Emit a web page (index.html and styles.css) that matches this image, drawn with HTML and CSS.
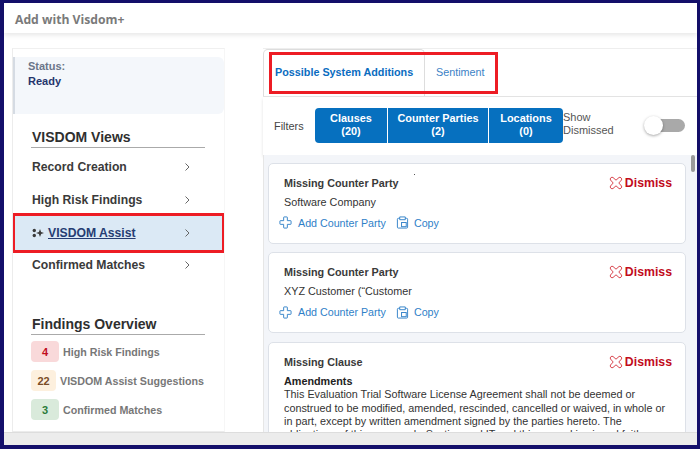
FILE: index.html
```html
<!DOCTYPE html>
<html lang="en">
<head>
<meta charset="utf-8">
<title>Add with Visdom+</title>
<link rel="stylesheet" href="styles.css">
</head>
<body>
<svg class="defs" aria-hidden="true">
  <symbol id="i-chev" viewBox="0 0 8 10"><path d="M2.500 1.500L6 5 2.500 8.500"/></symbol>
  <symbol id="i-x" viewBox="0 0 14 14"><path d="M4 1.500L7 4.200 10 1.500Q11 .8 12 1.800 13.200 3 12.500 4L9.800 7 12.500 10Q13.200 11 12 12.200 11 13.200 10 12.500L7 9.800 4 12.500Q3 13.200 1.800 12.200 .8 11 1.500 10L4.200 7 1.500 4Q.8 3 1.800 1.800 3 .8 4 1.500Z"/></symbol>
  <symbol id="i-plus" viewBox="0 0 14 14"><path d="M5 1.500Q5 1 5.500 1H8.500Q9 1 9 1.500V5H12.500Q13 5 13 5.500V8.500Q13 9 12.500 9H9V12.500Q9 13 8.500 13H5.500Q5 13 5 12.500V9H1.500Q1 9 1 8.500V5.500Q1 5 1.500 5H5Z"/></symbol>
  <symbol id="i-copy" viewBox="0 0 14 14"><path d="M4 2.500H2.500Q1.500 2.500 1.500 3.500V12Q1.500 13 2.500 13H11.500Q12.500 13 12.500 12V3.500Q12.500 2.500 11.500 2.500H10M4 1H10V4H4Z"/><rect x="6" y="7" width="5" height="4.500"/></symbol>
</svg>
<div class="frame">
  <header class="topbar">Add with Visdom+</header>
  <div class="workspace">
    <aside class="sidebar">
      <div class="status">
        <div class="status-label">Status:</div>
        <div class="status-value">Ready</div>
      </div>
      <h2 class="section-title views-title">VISDOM Views</h2>
      <nav class="nav">
        <div class="nav-item"><span>Record Creation</span><svg class="chev"><use href="#i-chev"/></svg></div>
        <div class="nav-item"><span>High Risk Findings</span><svg class="chev"><use href="#i-chev"/></svg></div>
        <div class="nav-item active">
          <span class="assist-label">
            <svg class="sparkle" viewBox="0 0 12 10"><path d="M8 1L9.100 3.900 12 5 9.100 6.100 8 9 6.900 6.100 4 5 6.900 3.900Z"/><circle cx="2.300" cy="2.500" r="1.700"/><circle cx="2.300" cy="7.500" r="1.700"/></svg>
            <u>VISDOM Assist</u>
          </span>
          <svg class="chev"><use href="#i-chev"/></svg>
        </div>
        <div class="nav-item"><span>Confirmed Matches</span><svg class="chev"><use href="#i-chev"/></svg></div>
      </nav>
      <h2 class="section-title findings-title">Findings Overview</h2>
      <div class="findings">
        <div class="finding"><span class="count red">4</span><span>High Risk Findings</span></div>
        <div class="finding"><span class="count orange narrow">22</span><span>VISDOM Assist Suggestions</span></div>
        <div class="finding"><span class="count green">3</span><span>Confirmed Matches</span></div>
      </div>
    </aside>
    <main class="content">
      <div class="tabs">
        <div class="tab selected">Possible System Additions</div>
        <div class="tab">Sentiment</div>
        <div class="tab-highlight"></div>
      </div>
      <div class="filters">
        <span class="filters-label">Filters</span>
        <div class="segments">
          <div class="segment seg-clauses">Clauses<br>(20)</div>
          <div class="segment seg-parties">Counter Parties<br>(2)</div>
          <div class="segment seg-locations">Locations<br>(0)</div>
        </div>
        <span class="show-label">Show Dismissed</span>
        <span class="toggle"><span class="knob"></span></span>
      </div>
      <div class="results">
        <div class="thumb"></div>
        <article class="card">
          <span class="speck"></span>
          <div class="card-head"><strong>Missing Counter Party</strong>
            <span class="dismiss"><svg class="x-icon"><use href="#i-x"/></svg>Dismiss</span></div>
          <div class="card-body">Software Company</div>
          <div class="actions">
            <span class="action"><svg class="action-icon"><use href="#i-plus"/></svg>Add Counter Party</span>
            <span class="action copy"><svg class="action-icon"><use href="#i-copy"/></svg>Copy</span>
          </div>
        </article>
        <article class="card">
          <div class="card-head"><strong>Missing Counter Party</strong>
            <span class="dismiss"><svg class="x-icon"><use href="#i-x"/></svg>Dismiss</span></div>
          <div class="card-body">XYZ Customer (“Customer</div>
          <div class="actions">
            <span class="action"><svg class="action-icon"><use href="#i-plus"/></svg>Add Counter Party</span>
            <span class="action copy"><svg class="action-icon"><use href="#i-copy"/></svg>Copy</span>
          </div>
        </article>
        <article class="card clause">
          <div class="card-head"><strong>Missing Clause</strong>
            <span class="dismiss"><svg class="x-icon"><use href="#i-x"/></svg>Dismiss</span></div>
          <div class="clause-title">Amendments</div>
          <p class="clause-text">This Evaluation Trial Software License Agreement shall not be deemed or construed to be modified, amended, rescinded, cancelled or waived, in whole or in part, except by written amendment signed by the parties hereto. The obligations of this paragraph, Section and IT and this agreed in signed faith</p>
        </article>
      </div>
    </main>
  </div>
  <div class="bottombar"></div>
</div>
</body>
</html>
```
FILE: styles.css
```css
* { box-sizing: border-box; }
html, body { margin: 0; height: 100%; }
body { font-family: "Liberation Sans", Arial, sans-serif; overflow: hidden; background: #fff; }
.defs { position: absolute; width: 0; height: 0; }
.frame {
  width: 700px; height: 449px;
  border: solid #14106b;
  border-width: 3px 3px 4px 4px;
  display: flex; flex-direction: column;
  background: #fff;
}
.topbar {
  height: 30px; flex: none;
  padding: 8px 0 0 11px;
  font: 700 12.2px "Open Sans", sans-serif;
  color: #7a7a7a;
  background: #fff;
  box-shadow: 0 2px 5px rgba(0,0,0,.1);
  position: relative;
}
.workspace {
  flex: 1; min-height: 0;
  display: flex;
  padding: 15px 0 0 8px;
  background: #fff;
}
.sidebar {
  width: 213px; flex: none;
  border-left: 1px solid #ececec;
  border-top: 1px solid #f0f0f0;
  border-right: 1px solid #f6f6f6;
  border-bottom: 1px solid #ececec;
  overflow: hidden;
}
.status {
  height: 57px; margin: 8px 0 0 -1px;
  padding: 2px 0 0 13px;
  background: #f4f7fb;
  border-left: 3px solid #d5dbe3;
  border-radius: 0 6px 6px 0;
  font-size: 11px; line-height: 15px; font-weight: 700;
}
.status-label { color: #6b7589; }
.status-value { color: #25356c; }
.section-title {
  margin: 0 0 0 18px; width: 174px;
  padding-left: 1px; padding-bottom: 1px;
  font-size: 14px; line-height: 17px; font-weight: 700;
  color: #2f2f2f;
  border-bottom: 1px solid #aaa;
}
.views-title { margin-top: 15px; }
.findings-title { margin-top: 35px; }
.nav { margin-top: 2px; }
.nav-item {
  height: 33px;
  display: flex; align-items: center; justify-content: space-between;
  padding: 0 33px 0 19px;
  font-size: 12.2px; font-weight: 700; color: #3a3a3a;
}
.nav-item.active {
  background: #dbe9f5;
  outline: 3px solid #ed1c24;
  outline-offset: -3px;
  height: 40px;
  margin: -3px -1px -5px -1px;
  padding-left: 20px;
  padding-right: 34px;
  position: relative;
  color: #263d73;
}
.assist-label { display: flex; align-items: center; gap: 4px; }
.sparkle { width: 12px; height: 10px; fill: #3a3a3a; }
.chev { width: 8px; height: 10px; fill: none; stroke: #666; stroke-width: 1; }
.findings { margin: 6px 0 0 18px; display: flex; flex-direction: column; gap: 8px; }
.finding {
  display: flex; align-items: center; gap: 4px;
  font-size: 10.7px; font-weight: 700; color: #777;
  height: 21px; white-space: nowrap;
}
.count {
  width: 28px; height: 21px; border-radius: 4px;
  display: flex; align-items: center; justify-content: center;
  font-size: 11px;
}
.count.narrow { width: 25px; }
.count.red { background: #f9d9da; color: #c00d1e; }
.count.orange { background: #fdf0de; color: #7a4d26; }
.count.green { background: #d9eadb; color: #2b7a3a; }
.content {
  flex: 1; min-width: 0;
  margin-left: 38px;
  display: flex; flex-direction: column;
  min-height: 0;
}
.tabs {
  height: 49px; flex: none;
  display: flex;
  border-top: 1px solid #eee;
  border-bottom: 1px solid #e4e4e4;
  position: relative;
}
.tab-highlight {
  position: absolute; left: 6px; top: 3px;
  width: 229px; height: 42px;
  border: 3px solid #ed1c24;
}
.tab {
  display: flex; align-items: center;
  font-size: 10.8px; color: #3c82c6;
  padding: 0 0 2px 11px;
}
.tab.selected {
  width: 162px; padding: 0 0 2px 11px;
  font-weight: 700; color: #0a6cbf;
  border: 1px solid #ddd;
  border-top-left-radius: 5px; border-top-right-radius: 5px;
  border-bottom: 0;
}
.filters {
  height: 58px; flex: none;
  display: flex; align-items: flex-start;
  padding: 11px 0 0 11px;
  box-shadow: 0 2px 3px rgba(0,0,0,.12);
  position: relative;
}
.filters-label { font-size: 10.9px; line-height: 37px; color: #444; width: 41px; }
.segments { display: flex; gap: 1px; height: 35px; border-radius: 4px; overflow: hidden; }
.segment {
  background: #0670bf; color: #fff;
  display: flex; align-items: center; justify-content: center; text-align: center;
  font-size: 10.9px; font-weight: 700; line-height: 13px;
  padding-bottom: 2px;
}
.seg-clauses { width: 72px; }
.seg-parties { width: 100px; }
.seg-locations { width: 74px; }
.show-label { width: 60px; margin-top: 3px; font-size: 11px; line-height: 13px; color: #555; }
.toggle {
  width: 35px; height: 13px; border-radius: 7px; background: #a9a9a9;
  position: relative; margin: 11px 0 0 27px;
}
.knob {
  position: absolute; left: -6px; top: -3px;
  width: 19px; height: 19px; border-radius: 50%;
  background: #fff; box-shadow: 0 1px 3px rgba(0,0,0,.35);
}
.results {
  flex: 1; min-height: 0; overflow: hidden;
  background: #f3f5f9;
  border-left: 1px solid #e6e6e6;
  padding: 8px 11px 0 4px;
  display: flex; flex-direction: column; gap: 8.4px;
  position: relative;
}
.thumb {
  position: absolute; right: 2px; top: 0;
  width: 4px; height: 17px; background: #9a9a9a; border-radius: 2px;
}
.card {
  flex: none;
  background: #fff;
  border: 1px solid #dde1e8;
  border-radius: 5px;
  padding: 11px 13px 0 15px;
  height: 81px;
  position: relative;
}
.speck { position: absolute; left: 145px; top: 10px; width: 1px; height: 1px; background: #555; }
.card.clause { height: 100px; }
.card-head {
  display: flex; justify-content: space-between; align-items: center;
  height: 16px; font-size: 10.8px; color: #3a3a3a;
}
.dismiss {
  display: flex; align-items: center; gap: 2px;
  color: #c20c1c; font-size: 12.3px; font-weight: 700;
}
.x-icon { width: 14px; height: 14px; fill: #fff; stroke: #d9464f; stroke-width: 1; }
.card-body { margin-top: 3px; font-size: 10.8px; line-height: 16px; color: #333; }
.actions { margin: 6.4px 0 0 -5px; display: flex; gap: 10px; }
.action { display: flex; align-items: center; gap: 6px; font-size: 10.7px; color: #2f7fc8; }
.action.copy { gap: 5px; }
.action-icon { width: 13px; height: 13px; fill: none; stroke: #2f7fc8; stroke-width: 1; }
.clause-title { margin-top: 4.500px; font-size: 10.8px; line-height: 14px; font-weight: 700; color: #222; }
.clause-text { margin: 0; font-size: 10.8px; line-height: 13.3px; color: #333; }
.bottombar {
  height: 13px; flex: none;
  background: #ececec;
  border-top: 1px solid #ddd;
  position: relative;
}
```
